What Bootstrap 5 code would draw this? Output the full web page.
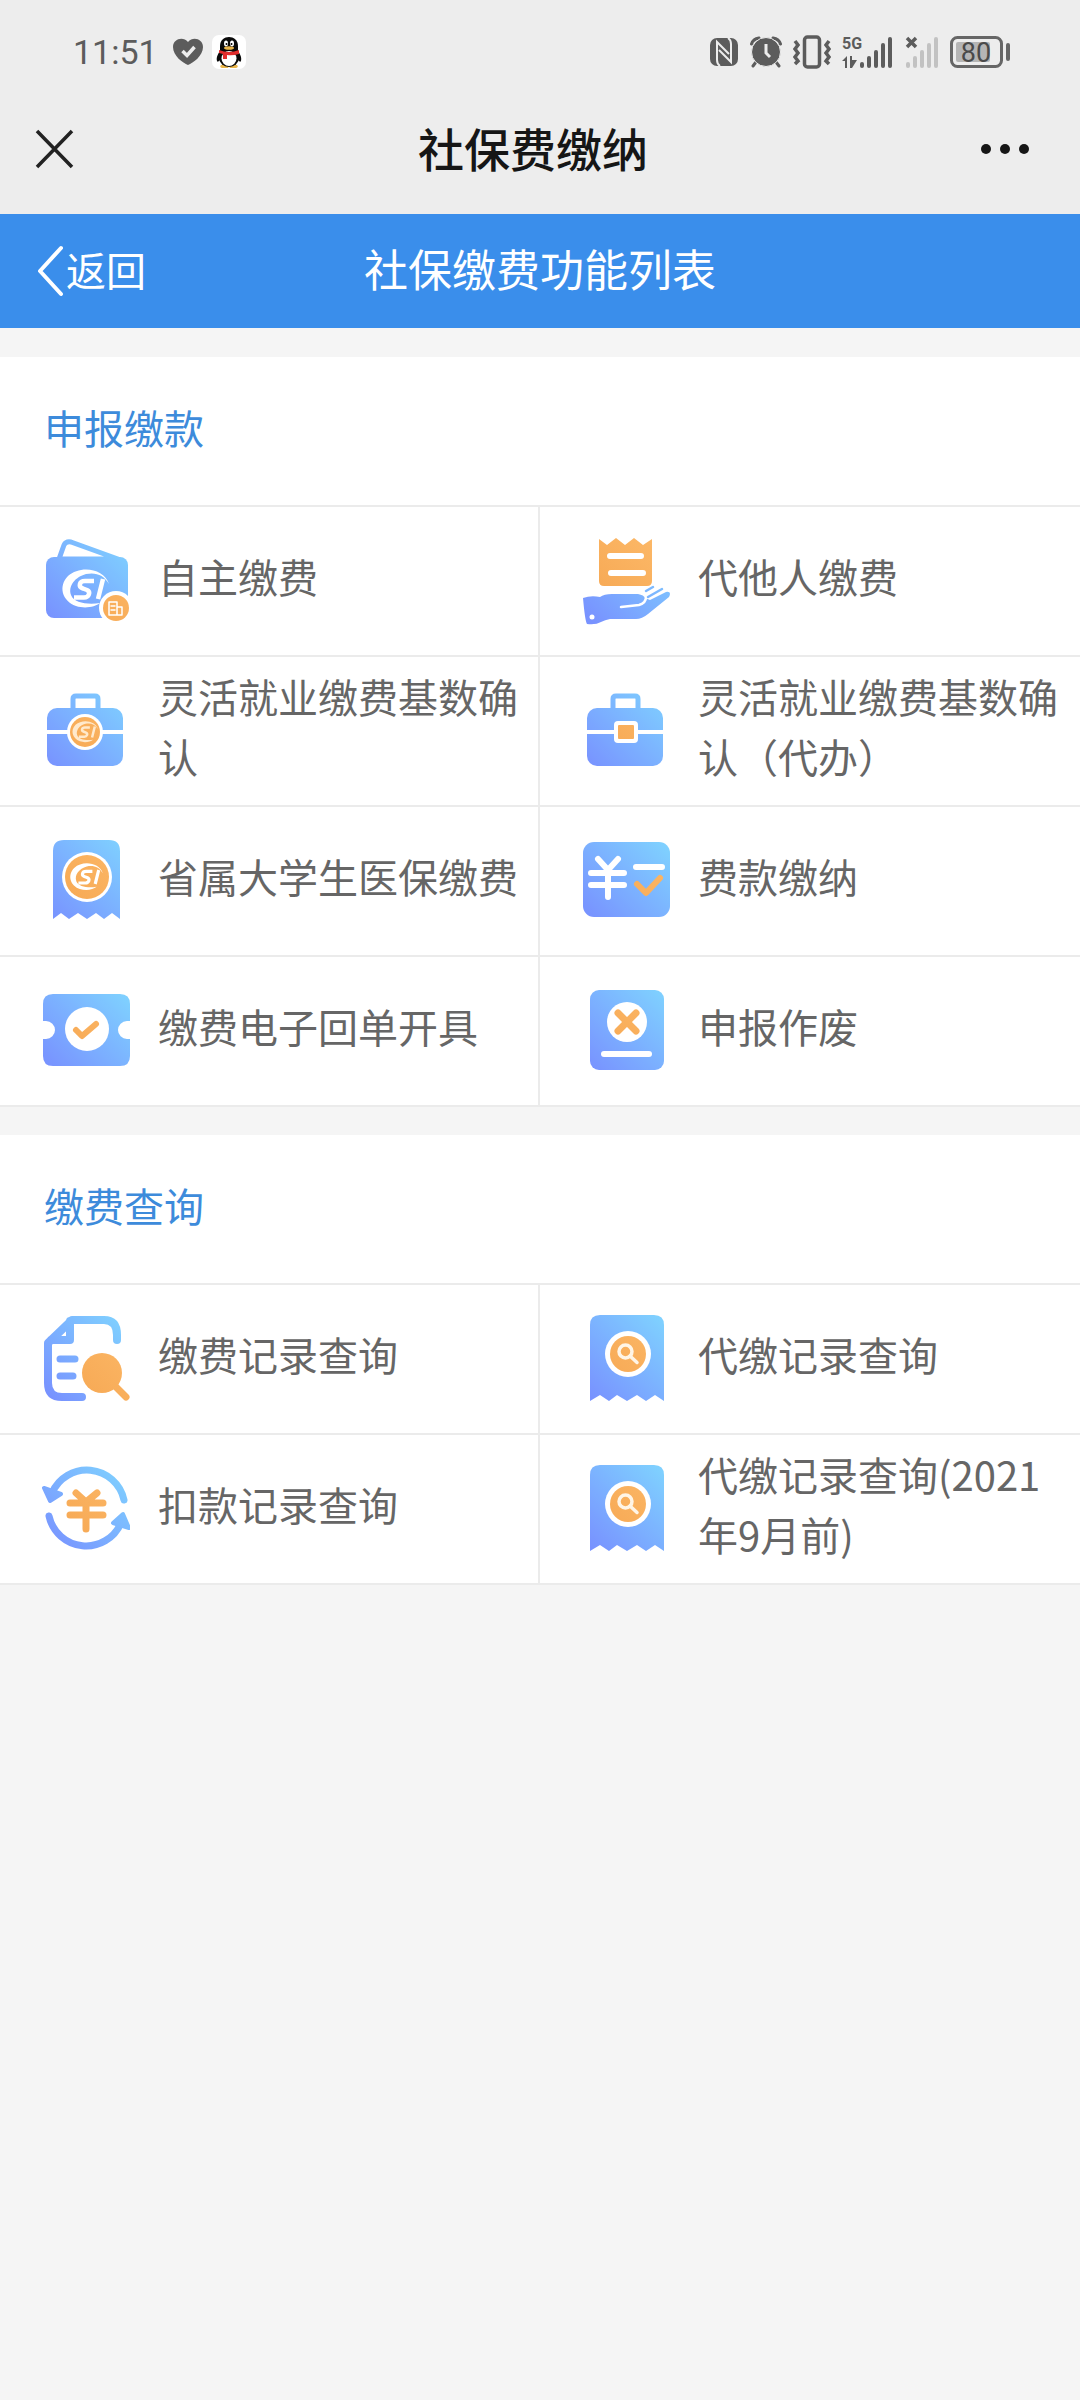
<!DOCTYPE html>
<html lang="zh-CN">
<head>
<meta charset="utf-8">
<meta name="viewport" content="width=device-width, initial-scale=1">
<title>社保费缴纳</title>
<link href="https://cdn.jsdelivr.net/npm/bootstrap@5.3.0/dist/css/bootstrap.min.css" rel="stylesheet">
<style>
  body { background: #f5f5f5; font-family: "Noto Sans CJK SC", sans-serif; font-size: 40px; line-height: 60px; color: #666; }
  .sys-head { background: #ededed; }
  .status-bar { height: 84px; padding: 20px 70px 0 73px; color: #5c5c5c; }
  .clock { font-family: Roboto, sans-serif; font-size: 34px; line-height: 40px; margin-right: 15px; }
  .status-icons { gap: 11px; }
  .bar-grid { display: grid; grid-template-columns: 1fr auto 1fr; align-items: center; }
  .title-bar { height: 130px; padding: 0 48px 0 34px; color: #161616; }
  .title-bar h1 { font-size: 46px; line-height: 64px; font-weight: 500; padding-bottom: 4px; }
  .nav-blue { background: #3a8eeb; height: 114px; padding: 0 36px; color: #fff; }
  .nav-blue h2 { font-size: 44px; line-height: 64px; font-weight: 400; padding-bottom: 6px; }
  .nav-blue a { color: #fff; gap: 2px; }
  .nav-blue a span { padding-bottom: 4px; }
  .func-group { margin-top: 29px; border-bottom: 2px solid #ebebeb; background: #fff; }
  .func-group + .func-group { margin-top: 28px; }
  .group-title { font-size: 40px; line-height: 60px; font-weight: 400; color: #3d8bdb; padding: 40px 44px 48px; }
  .cell { min-height: 150px; padding: 0 14px 0 42px; gap: 28px; border-top: 2px solid #ebebeb; color: #666; }
  .cell-left { border-right: 2px solid #ebebeb; }
  .cell span { padding-bottom: 10px; min-width: 0; }
  .cell svg { width: 88px; height: 88px; fill: none; stroke-linecap: round; stroke-linejoin: round; }
</style>
</head>
<body>
<svg width="0" height="0" class="position-absolute" aria-hidden="true">
  <defs>
    <linearGradient id="blue" gradientUnits="userSpaceOnUse" x1="8" y1="82" x2="82" y2="8">
      <stop offset="0" stop-color="#7892ff"/><stop offset="1" stop-color="#7fd0ff"/>
    </linearGradient>
    <linearGradient id="gold" gradientUnits="userSpaceOnUse" x1="10" y1="80" x2="80" y2="10">
      <stop offset="0" stop-color="#f5a550"/><stop offset="1" stop-color="#fcb867"/>
    </linearGradient>
    <symbol id="si" viewBox="0 0 50 40" overflow="visible">
      <path d="M47 15C42-1 18-4 6 7C-4 17 0 32 14 37C23 40 33 38 38 34C26 36 12 34 9 26C6 17 13 8 24 5C34 3 42 6 47 15Z" fill="currentColor"/>
      <path d="M32 12H23C17 12 16 18 21 19.500L25 21C29 23 27 28.500 22 28.500H12M41 10L36 30" fill="none" stroke="currentColor" stroke-width="4.500" stroke-linecap="butt"/>
    </symbol>
    <symbol id="receipt" viewBox="0 0 88 88">
      <path d="M8 86V10Q8 0 18 0H72Q82 0 82 10V86L73 80L64 86L55 80L45 86L35 80L27 86L18 80Z" fill="url(#blue)"/>
      <circle cx="46" cy="39" r="23" fill="#fff"/><circle cx="46" cy="39" r="18" fill="url(#gold)"/>
      <g fill="none" stroke="#fff5e6" stroke-width="3.500"><circle cx="43.500" cy="36.500" r="6.500"/><path d="M48 41L55 47.500"/></g>
    </symbol>
  </defs>
</svg>

<header class="sys-head">
  <div class="status-bar d-flex align-items-center">
    <span class="clock">11:51</span>
    <svg width="30" height="28" viewBox="0 0 30 28" aria-label="健康"><path d="M15 27C10 25 0 18 0 9C0 1 10-2 15 4C20-2 30 1 30 9C30 18 20 25 15 27Z" fill="#5c5c5c"/><path d="M9.500 13L14 17.500L21.500 9" fill="none" stroke="#ededed" stroke-width="3.500"/></svg>
    <svg class="ms-2" width="36" height="36" viewBox="0 0 36 36" aria-label="QQ">
      <rect x="1" y="1" width="34" height="34" rx="7" fill="#fff"/>
      <path d="M10 31Q8 33 11 34H17L18 32L19 34H25Q28 33 26 31Z" fill="#e9b54a"/>
      <path d="M10 15C7 20 5 23 6 27C7 29 9 26 10 24H26C27 26 29 29 30 27C31 23 29 20 26 15Z" fill="#0a0a0a"/>
      <ellipse cx="18" cy="24" rx="10" ry="9" fill="#0a0a0a"/><ellipse cx="18" cy="24.500" rx="7.500" ry="7.500" fill="#fff"/>
      <path d="M9 17V12C9 0 27 0 27 12V17Z" fill="#0a0a0a"/>
      <ellipse cx="15" cy="9.500" rx="2" ry="3" fill="#fff"/><ellipse cx="21" cy="9.500" rx="2" ry="3" fill="#fff"/>
      <circle cx="15.500" cy="10" r="1" fill="#000"/><circle cx="20.500" cy="10" r="1" fill="#000"/>
      <ellipse cx="18" cy="14" rx="5" ry="1.800" fill="#e9b54a"/>
      <path d="M8 16Q18 20 28 16V20Q21 22 16 21V25H12V20L8 19Z" fill="#e12d2d"/>
    </svg>
    <div class="status-icons d-flex align-items-center ms-auto">
      <svg width="30" height="30" viewBox="0 0 30 30" aria-label="NFC"><rect x="1" y="1" width="28" height="28" rx="7" fill="#5c5c5c"/><path d="M11 29Q8 27 8 23V5L20 17M19 1Q22 3 22 7V25L10 13" fill="none" stroke="#ededed" stroke-width="2"/></svg>
      <svg width="32" height="32" viewBox="0 0 32 32" aria-label="闹钟"><path d="M6 26L3 30M26 26L29 30M1.500 8Q3 3 9 2M30.500 8Q29 3 23 2" fill="none" stroke="#5c5c5c" stroke-width="3" stroke-linecap="round"/><circle cx="16" cy="16" r="14.500" fill="#5c5c5c" stroke="#ededed" stroke-width="1"/><path d="M16 8V17L20 21" fill="none" stroke="#ededed" stroke-width="3"/></svg>
      <svg width="38" height="34" viewBox="0 0 38 34" aria-label="振动" fill="none" stroke="#5c5c5c"><rect x="11.500" y="2" width="15" height="30" rx="3" stroke-width="3.500"/><path d="M2 6L5 10L2 14L5 18L2 22L5 26L2 29M36 6L33 10L36 14L33 18L36 22L33 26L36 29" stroke-width="3.500"/></svg>
      <svg width="52" height="38" viewBox="0 -2 52 38" aria-label="5G 信号" fill="#5c5c5c" overflow="visible">
        <text x="0" y="14" font-family="Roboto, sans-serif" font-size="16" font-weight="700">5G</text>
        <path d="M0 26L5 21V33H3V26ZM8 21H10V25H15L10 33H8Z"/>
        <rect x="18" y="27" width="4" height="6" rx="2"/><rect x="25" y="21" width="4" height="12" rx="2"/><rect x="32" y="15" width="4" height="18" rx="2"/><rect x="39" y="8" width="4" height="25" rx="2"/><rect x="46" y="2" width="4" height="31" rx="2"/>
      </svg>
      <svg width="34" height="34" viewBox="0 0 34 34" aria-label="无信号" fill="#c2c2c2">
        <path d="M2 3L11 12M11 3L2 12" stroke="#5c5c5c" stroke-width="3.500"/>
        <rect x="1" y="27" width="4" height="6" rx="2"/><rect x="8" y="21" width="4" height="12" rx="2"/><rect x="15" y="15" width="4" height="18" rx="2"/><rect x="22" y="8" width="4" height="25" rx="2"/><rect x="29" y="2" width="4" height="31" rx="2"/>
      </svg>
      <svg width="60" height="34" viewBox="0 0 60 34" aria-label="电量 80%"><rect x="1.500" y="2.500" width="50" height="29" rx="6" fill="none" stroke="#666" stroke-width="3"/><rect x="6" y="7" width="34" height="20" rx="2" fill="#b5b5b5"/><rect x="56" y="8" width="4" height="18" rx="2" fill="#666"/><text x="26" y="27" text-anchor="middle" font-family="Roboto, sans-serif" font-size="27" fill="#4a4a4a">80</text></svg>
    </div>
  </div>
  <div class="title-bar bar-grid">
    <button type="button" class="btn p-0 border-0 d-flex me-auto" aria-label="关闭"><svg width="40" height="40" viewBox="0 0 40 40"><path d="M3 2L38 38M38 2L3 38" stroke="#222" stroke-width="3.500"/></svg></button>
    <h1 class="m-0">社保费缴纳</h1>
    <button type="button" class="btn p-0 border-0 d-flex ms-auto" aria-label="更多"><svg width="52" height="12" viewBox="0 0 52 12" fill="#161616"><circle cx="6" cy="6" r="5"/><circle cx="25" cy="6" r="5"/><circle cx="44" cy="6" r="5"/></svg></button>
  </div>
</header>

<nav class="nav-blue bar-grid">
  <a href="#" class="d-flex align-items-center text-decoration-none me-auto"><svg width="28" height="52" viewBox="0 0 28 52"><path d="M25 3L4 26L25 49" fill="none" stroke="#fff" stroke-width="4" stroke-linecap="round" stroke-linejoin="round"/></svg><span>返回</span></a>
  <h2 class="m-0">社保缴费功能列表</h2>
  <span></span>
</nav>

<main>
  <section class="func-group">
    <h3 class="group-title m-0">申报缴款</h3>
    <div class="row g-0">
      <a href="#" class="col-6 cell cell-left d-flex align-items-center text-decoration-none">
        <svg class="flex-shrink-0" viewBox="0 0 88 88"><path d="M17 22L22 8Q24 4 29 5L76 22Z" stroke="url(#blue)" stroke-width="5"/><rect x="4" y="20" width="82" height="61" rx="8" fill="url(#blue)"/><use href="#si" x="20" y="32" width="50" height="40" color="#fff"/><circle cx="74" cy="71" r="17" fill="#fff"/><circle cx="74" cy="71" r="13" fill="url(#gold)"/><path d="M67 65H75V78H67ZM75 70H80V78H75M69 69H73M69 73H73" stroke="#fff" stroke-width="1.500"/></svg>
        <span>自主缴费</span></a>
      <a href="#" class="col-6 cell d-flex align-items-center text-decoration-none">
        <svg class="flex-shrink-0" viewBox="0 0 88 88"><path d="M17 2L25 8L34 1L43 8L52 1L61 8L70 2V44Q70 49 65 49H22Q17 49 17 44Z" fill="url(#gold)"/><path d="M28 19H59M29 36H61" stroke="#fff" stroke-width="6"/><path d="M1 61Q9 58 18 60Q22 57 30 57H56Q62 58 63 61L68 63L84 55Q90 54 87 60L66 77Q60 82 54 82H28Q23 83 19 85Q14 88 5 87Q3 84 1 61Z" fill="url(#blue)"/><path d="M39 70L57 68Q64 66 64 60" stroke="#fff" stroke-width="2.500"/><path d="M64 54L71 50M66 60L80 52" stroke="url(#blue)" stroke-width="2.500"/><circle cx="10" cy="80" r="2.500" fill="#fff"/></svg>
        <span>代他人缴费</span></a>
      <a href="#" class="col-6 cell cell-left d-flex align-items-center text-decoration-none">
        <svg class="flex-shrink-0" viewBox="0 0 88 88"><path d="M31 23V12Q31 9 34 9H53Q56 9 56 12V23" stroke="url(#blue)" stroke-width="5"/><rect x="5" y="21" width="76" height="58" rx="10" fill="url(#blue)"/><path d="M5 45H81" stroke="#fff" stroke-width="4"/><circle cx="43" cy="45" r="18" fill="#fff"/><circle cx="43" cy="45" r="15" fill="url(#gold)"/><use href="#si" x="30" y="34" width="28" height="22" color="#ffe9cc"/></svg>
        <span>灵活就业缴费基数确认</span></a>
      <a href="#" class="col-6 cell d-flex align-items-center text-decoration-none">
        <svg class="flex-shrink-0" viewBox="0 0 88 88"><path d="M31 23V12Q31 9 34 9H53Q56 9 56 12V23" stroke="url(#blue)" stroke-width="5"/><rect x="5" y="21" width="76" height="58" rx="10" fill="url(#blue)"/><path d="M5 45H81" stroke="#fff" stroke-width="4"/><rect x="32" y="34" width="24" height="22" rx="4" fill="#fff"/><rect x="36" y="38" width="16" height="14" rx="1" fill="url(#gold)"/></svg>
        <span>灵活就业缴费基数确认（代办）</span></a>
      <a href="#" class="col-6 cell cell-left d-flex align-items-center text-decoration-none">
        <svg class="flex-shrink-0" viewBox="0 0 88 88"><path d="M11 82V14Q11 3 22 3H67Q78 3 78 14V82L70 76L62 82L54 76L45 82L36 76L27 82L19 76Z" fill="url(#blue)"/><circle cx="45" cy="40" r="25" fill="#fff"/><circle cx="45" cy="40" r="22" fill="url(#gold)"/><use href="#si" x="28" y="26" width="35" height="28" color="#fff"/></svg>
        <span>省属大学生医保缴费</span></a>
      <a href="#" class="col-6 cell d-flex align-items-center text-decoration-none">
        <svg class="flex-shrink-0" viewBox="0 0 88 88"><rect x="1" y="5" width="87" height="75" rx="11" fill="url(#blue)"/><path d="M16 22L26 33L36 22M9 36H42M9 48H42M26 35V60M54 30H80" stroke="#fff" stroke-width="6"/><path d="M55 47L64 56L78 41" stroke="url(#gold)" stroke-width="6"/></svg>
        <span>费款缴纳</span></a>
      <a href="#" class="col-6 cell cell-left d-flex align-items-center text-decoration-none">
        <svg class="flex-shrink-0" viewBox="0 0 88 88"><path d="M1 17Q1 7 11 7H78Q88 7 88 17V34H85A9 9 0 0 0 85 52H88V69Q88 79 78 79H11Q1 79 1 69V52H4A9 9 0 0 0 4 34H1Z" fill="url(#blue)"/><circle cx="45" cy="42" r="22" fill="#fff"/><path d="M34 43L40 49L54 37" stroke="url(#gold)" stroke-width="6"/></svg>
        <span>缴费电子回单开具</span></a>
      <a href="#" class="col-6 cell d-flex align-items-center text-decoration-none">
        <svg class="flex-shrink-0" viewBox="0 0 88 88"><rect x="8" y="3" width="74" height="80" rx="9" fill="url(#blue)"/><circle cx="45" cy="35" r="20" fill="#fff"/><path d="M36 26L54 44M54 26L36 44" stroke="url(#gold)" stroke-width="7"/><path d="M22 67H67" stroke="#fff" stroke-width="6"/></svg>
        <span>申报作废</span></a>
    </div>
  </section>

  <section class="func-group">
    <h3 class="group-title m-0">缴费查询</h3>
    <div class="row g-0">
      <a href="#" class="col-6 cell cell-left d-flex align-items-center text-decoration-none">
        <svg class="flex-shrink-0" viewBox="0 0 88 88"><path d="M75 25V20Q75 5 62 5H30L6 28V68Q6 82 20 82H40M28 6V25H9" stroke="url(#blue)" stroke-width="8"/><path d="M18 44H33M18 61H31" stroke="url(#blue)" stroke-width="7"/><path d="M70 68L84 82" stroke="url(#gold)" stroke-width="7"/><circle cx="60" cy="58" r="20" fill="url(#gold)"/></svg>
        <span>缴费记录查询</span></a>
      <a href="#" class="col-6 cell d-flex align-items-center text-decoration-none">
        <svg class="flex-shrink-0" viewBox="0 0 88 88"><use href="#receipt"/></svg>
        <span>代缴记录查询</span></a>
      <a href="#" class="col-6 cell cell-left d-flex align-items-center text-decoration-none">
        <svg class="flex-shrink-0" viewBox="0 0 88 88"><path d="M82 35A38 38 0 0 0 10 28M7 51A38 38 0 0 0 79 58" stroke="url(#blue)" stroke-width="7"/><path d="M2 23L19 29L8 36ZM81 49L71 58L87 63Z" fill="url(#blue)" stroke="url(#blue)" stroke-width="4"/><path d="M34 28L44 37L55 28M28 38H61M28 50H61M44 37V64" stroke="url(#gold)" stroke-width="7"/></svg>
        <span>扣款记录查询</span></a>
      <a href="#" class="col-6 cell d-flex align-items-center text-decoration-none">
        <svg class="flex-shrink-0" viewBox="0 0 88 88"><use href="#receipt"/></svg>
        <span>代缴记录查询(2021年9月前)</span></a>
    </div>
  </section>
</main>
<script src="https://cdn.jsdelivr.net/npm/bootstrap@5.3.0/dist/js/bootstrap.bundle.min.js"></script>
</body>
</html>
